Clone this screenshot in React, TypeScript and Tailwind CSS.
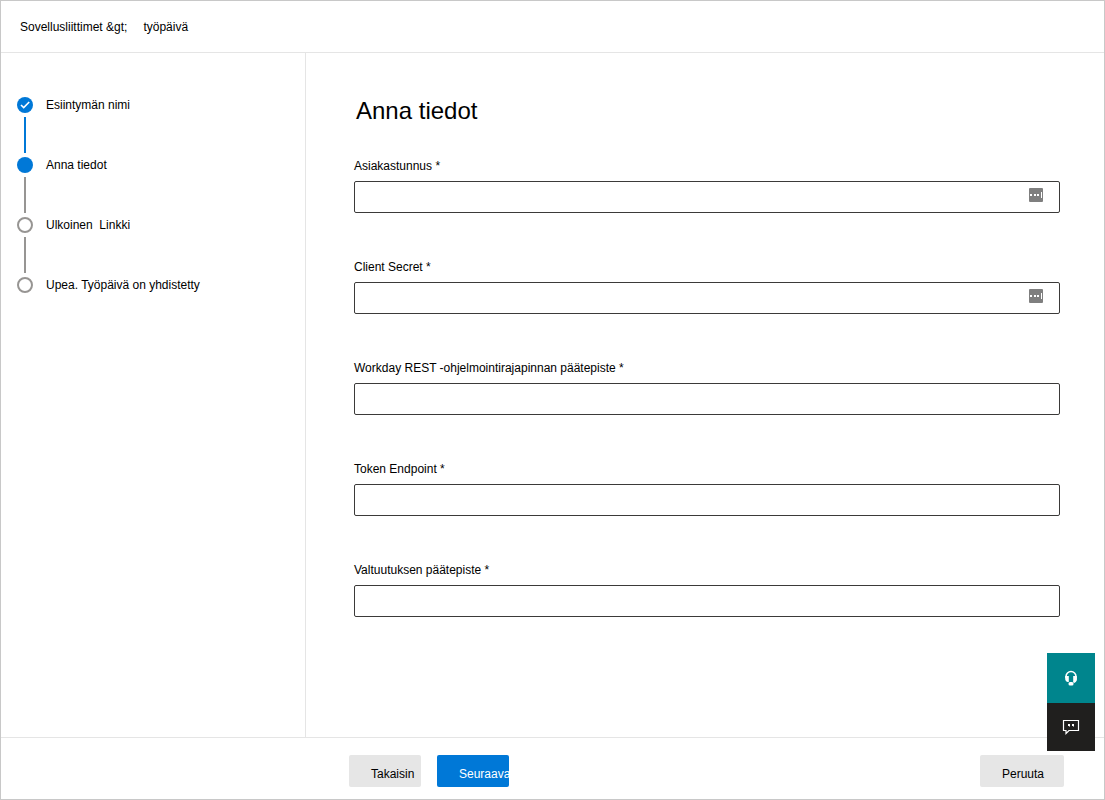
import type { ReactNode } from 'react';

type StepState = 'done' | 'current' | 'upcoming';

const steps: { label: ReactNode; state: StepState }[] = [
  { label: 'Esiintymän nimi', state: 'done' },
  { label: 'Anna tiedot', state: 'current' },
  { label: <>Ulkoinen&nbsp; Linkki</>, state: 'upcoming' },
  { label: 'Upea. Työpäivä on yhdistetty', state: 'upcoming' },
];

const fields = [
  { id: 'client-id', label: 'Asiakastunnus', type: 'text', manager: true },
  { id: 'client-secret', label: 'Client Secret', type: 'password', manager: true },
  { id: 'rest-endpoint', label: 'Workday REST -ohjelmointirajapinnan päätepiste', type: 'text' },
  { id: 'token-endpoint', label: 'Token Endpoint', type: 'text' },
  { id: 'auth-endpoint', label: 'Valtuutuksen päätepiste', type: 'text' },
];

function StepMarker({ state }: { state: StepState }) {
  if (state === 'upcoming') {
    return <span className="size-4 rounded-full border-2 border-[#979593]" />;
  }
  return (
    <span className="flex size-4 items-center justify-center rounded-full bg-[#0078d7]">
      {state === 'done' && (
        <svg className="size-4" viewBox="0 0 16 16" fill="none" stroke="#fff" strokeWidth="1.6">
          <path d="M4 8l2.700 2.600L12.200 5" />
        </svg>
      )}
    </span>
  );
}

function PasswordManagerIcon() {
  return (
    <svg className="size-[14px]" viewBox="0 0 14 14">
      <rect width="14" height="14" rx="1" fill="#7f7f7f" />
      <path d="M1 6h2v2H1zM5 6h2v2H5zM8 6h2v2H8zM12 4h1v6h-1z" fill="#fff" />
    </svg>
  );
}

export default function App() {
  return (
    <div className="flex min-h-screen flex-col border border-[#c8c8c8] bg-white font-['Liberation_Sans',Arial,sans-serif] text-xs text-black">
      <header className="flex h-[52px] items-center gap-4 border-b border-[#e5e5e5] px-[19px]">
        <span>Sovellusliittimet &amp;gt;</span>
        <span>työpäivä</span>
      </header>

      <div className="flex flex-1">
        <aside className="w-[305px] shrink-0 border-r border-[#e5e5e5] px-4 pt-11">
          <ol>
            {steps.map((step, i) => (
              <li key={i} className="flex gap-3">
                <div className="flex flex-col items-center gap-1">
                  <StepMarker state={step.state} />
                  {i < steps.length - 1 && (
                    <span
                      className={`mb-1 h-9 w-0.5 ${step.state === 'done' ? 'bg-[#0078d7]' : 'bg-[#979593]'}`}
                    />
                  )}
                </div>
                <span className="pl-px">{step.label}</span>
              </li>
            ))}
          </ol>
        </aside>

        <main className="flex-1 pt-[42px] pr-11 pb-8 pl-12">
          <h1 className="mb-[31px] pl-0.5 text-2xl">Anna tiedot</h1>
          <form id="details" className="flex flex-col gap-[46px]">
            {fields.map((field) => (
              <div key={field.id}>
                <label htmlFor={field.id} className="mb-[7px] block">
                  {field.label} <span>*</span>
                </label>
                <div className="relative">
                  <input
                    id={field.id}
                    type={field.type}
                    required
                    className="block h-8 w-full rounded-xs border border-[#3b3a39] px-2 outline-none focus:border-[#0078d7]"
                  />
                  {field.manager && (
                    <span className="absolute top-[7px] right-[17px]">
                      <PasswordManagerIcon />
                    </span>
                  )}
                </div>
              </div>
            ))}
          </form>
        </main>
      </div>

      <footer className="flex h-[62px] items-center gap-4 border-t border-[#e5e5e5] pt-1 pr-10 pl-[348px]">
        <button type="button" className="h-8 w-[72px] rounded-xs bg-[#e6e6e6] pt-1.5 pl-[22px] text-left">
          Takaisin
        </button>
        <button
          type="submit"
          form="details"
          className="h-8 w-[72px] overflow-hidden rounded-xs bg-[#0078d7] pt-1.5 pl-[22px] text-left text-white"
        >
          Seuraava
        </button>
        <button type="button" className="ml-auto h-8 w-[84px] rounded-xs bg-[#e6e6e6] pt-1.5 pl-[22px] text-left">
          Peruuta
        </button>
      </footer>

      {/* Help and feedback */}
      <div className="fixed right-2.5 bottom-[49px] flex w-12 flex-col">
        <button
          type="button"
          aria-label="Ohje"
          className="flex h-[50px] items-center justify-center bg-[#00858d] text-white"
        >
          <svg className="size-4" viewBox="0 0 16 16" fill="currentColor">
            <path
              d="M3 8V6.500a5 5 0 0 1 10 0V9.500c0 1.500-1 2.500-2.500 3"
              fill="none"
              stroke="currentColor"
              strokeWidth="1.5"
            />
            <path d="M2.200 6h3.600v6H5C3.300 12 2.200 10.500 2.200 9zM13.800 6h-3.600v6H11c1.700 0 2.800-1.500 2.800-3z" />
            <rect x="5.500" y="12" width="5" height="3.500" rx="1.500" />
          </svg>
        </button>
        <button
          type="button"
          aria-label="Palaute"
          className="flex h-12 items-center justify-center bg-[#201f1e] text-white"
        >
          <svg className="size-[18px]" viewBox="0 0 18 18" fill="none" stroke="currentColor" strokeWidth="1.2">
            <path d="M1.500 2.500h15v10H7l-3 3v-3H1.500z" />
            <path d="M6 6h2v2l-1 1V8H6zM10 6h2v2l-1 1V8h-1z" fill="currentColor" stroke="none" />
          </svg>
        </button>
      </div>
    </div>
  );
}
